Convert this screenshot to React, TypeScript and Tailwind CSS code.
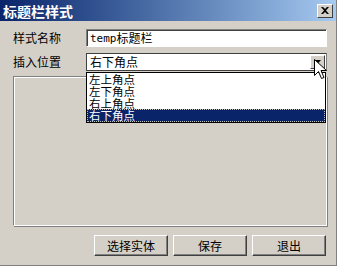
import React from "react";

const font = { fontFamily: '"Noto Sans CJK SC", "Liberation Sans", sans-serif' };

function Btn({ children }: { children: React.ReactNode }) {
  return (
    <div className="w-[74px] h-[21px] flex items-center justify-center text-[12px] text-black bg-[#d4d0c8] border border-t-white border-l-white border-b-[#404040] border-r-[#404040] shadow-[inset_-1px_-1px_0_#808080]">
      {children}
    </div>
  );
}

export default function App() {
  return (
    <div
      className="relative w-[337px] h-[266px] bg-[#d4d0c8] overflow-hidden flex flex-col border-r border-b border-r-[#808080] border-b-[#808080]"
      style={font}
    >
      {/* Title bar */}
      <div className="h-[21px] flex items-center justify-between pl-[3px] pr-[3px] bg-gradient-to-r from-[#0a246a] to-[#a6caf0]">
        <span className="text-white font-bold text-[14px] leading-none">标题栏样式</span>
        <div className="w-[16px] h-[14px] bg-[#d4d0c8] border border-t-white border-l-white border-b-[#404040] border-r-[#404040] flex items-center justify-center">
          <svg width="8" height="7" viewBox="0 0 8 7">
            <path d="M0 0 L2 0 L4 2 L6 0 L8 0 L5 3.5 L8 7 L6 7 L4 5 L2 7 L0 7 L3 3.5 Z" fill="#000" />
          </svg>
        </div>
      </div>

      <div className="flex flex-col pl-[13px] pr-[9px] pt-[8px]">
        {/* Row 1 */}
        <div className="flex items-center h-[18px]">
          <span className="w-[73px] text-[12px] text-black leading-none">样式名称</span>
          <div className="flex-1 h-[18px] bg-white border border-t-[#808080] border-l-[#808080] border-b-white border-r-white shadow-[inset_1px_1px_0_#404040] flex items-center pl-[3px] text-[12px] leading-none text-black">
            <span style={{ fontFamily: '"DejaVu Sans Mono", "Noto Sans CJK SC", monospace' }} className="text-[11px]">temp</span>
            <span>标题栏</span>
          </div>
        </div>

        {/* Row 2 */}
        <div className="flex items-center h-[18px] mt-[6px]">
          <span className="w-[73px] text-[12px] text-black leading-none">插入位置</span>
          <div className="flex-1 h-[18px] bg-white border border-t-[#404040] border-l-[#404040] border-b-[#404040] border-r-[#808080] flex items-center pl-[3px] text-[12px] leading-none text-black">
            <span className="flex-1">右下角点</span>
            <div className="w-[15px] h-[14px] mr-[1px] bg-[#d4d0c8] border border-t-white border-l-white border-b-[#404040] border-r-[#404040] flex items-center justify-center">
              <svg width="7" height="4" viewBox="0 0 7 4">
                <path d="M0 0 H7 L3.5 4 Z" fill="#000" />
              </svg>
            </div>
          </div>
        </div>

        {/* Group box */}
        <div className="mt-[5px] h-[150px] border border-t-[#808080] border-l-[#808080] border-b-white border-r-white shadow-[inset_1px_1px_0_#ffffff,1px_1px_0_#808080]"></div>

        {/* Buttons */}
        <div className="flex justify-end gap-[5px] mt-[9px] pr-[1px]">
          <Btn>选择实体</Btn>
          <Btn>保存</Btn>
          <Btn>退出</Btn>
        </div>
      </div>

      {/* Dropdown list overlay */}
      <div className="absolute left-[86px] top-[72px] w-[240px] bg-white border border-black flex flex-col text-[11.5px] leading-[12px] text-black">
        <div className="h-[12px] pl-[2px]">左上角点</div>
        <div className="h-[12px] pl-[2px]">左下角点</div>
        <div className="h-[12px] pl-[2px]">右上角点</div>
        <div className="h-[13px] pl-[1px] bg-[#0a246a] text-white border border-dotted border-[#c0c0c0] leading-[11px]">右下角点</div>
      </div>

      {/* Mouse cursor */}
      <svg className="absolute left-[314px] top-[59px]" width="14" height="22" viewBox="0 0 14 22">
        <path d="M0.5 0.5 L0.5 16.5 L4.5 12.5 L7.5 19.5 L10 18.5 L7 11.5 L12.5 11.5 Z" fill="#fff" stroke="#000" strokeWidth="1" />
      </svg>
    </div>
  );
}
